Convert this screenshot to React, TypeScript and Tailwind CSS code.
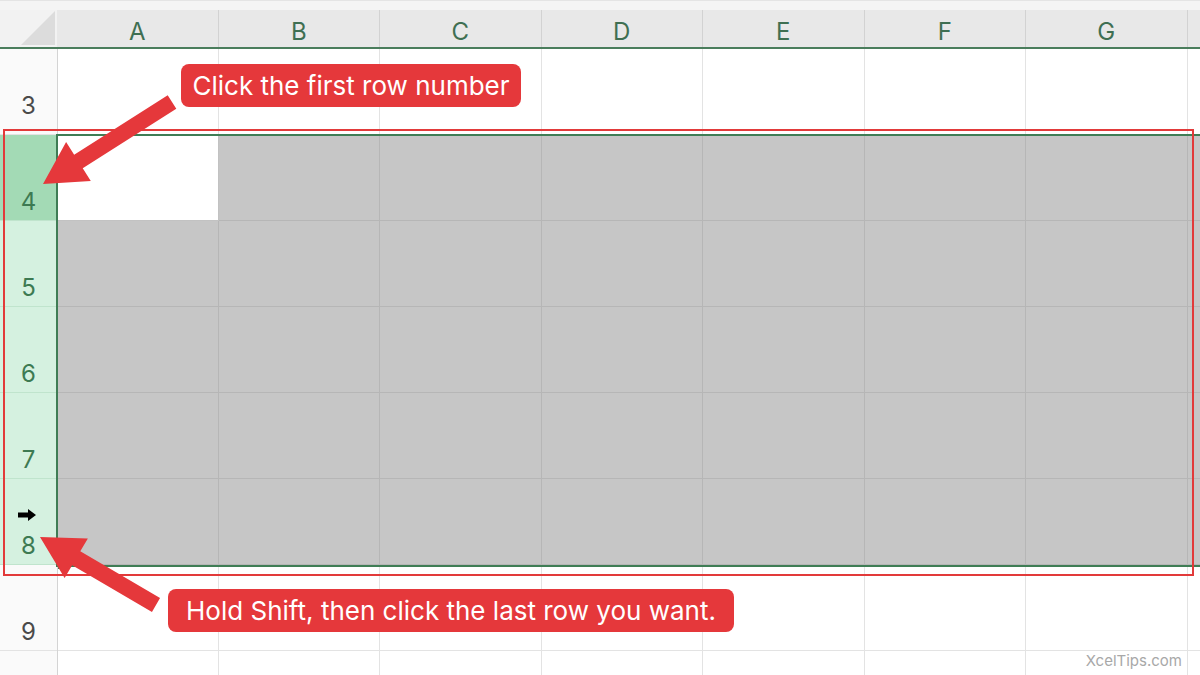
const columns = ["A", "B", "C", "D", "E", "F", "G"];
const rows = [3, 4, 5, 6, 7, 8, 9, 10];
const selected = [4, 5, 6, 7, 8];

function Arrow({ from, to }: { from: [number, number]; to: [number, number] }) {
  const [x1, y1] = from;
  const [x2, y2] = to;
  const dx = x2 - x1;
  const dy = y2 - y1;
  const len = Math.hypot(dx, dy);
  const ux = dx / len;
  const uy = dy / len;
  const px = -uy;
  const py = ux;
  const head = 42;
  const wing = 23;
  const shaft = 8;
  const bx = x2 - ux * head;
  const by = y2 - uy * head;
  const pts = [
    [x1 + px * shaft, y1 + py * shaft],
    [bx + px * shaft, by + py * shaft],
    [bx + px * wing, by + py * wing],
    [x2, y2],
    [bx - px * wing, by - py * wing],
    [bx - px * shaft, by - py * shaft],
    [x1 - px * shaft, y1 - py * shaft],
  ]
    .map((p) => p.join(","))
    .join(" ");
  return <polygon points={pts} fill="#e5383b" />;
}

function RowHeader({ n }: { n: number }) {
  const isSel = selected.includes(n);
  const bg = n === 4 ? "bg-[#a3dab5]" : isSel ? "bg-[#d5f1e0]" : "bg-[#fafafa]";
  const color = isSel ? "text-[#3d7a52]" : "text-[#4a4a4a]";
  return (
    <div
      className={`relative flex w-[57px] shrink-0 items-end justify-center border-b text-[24px] ${
        n === 3 ? "pb-[10px]" : "pb-0"
      } ${bg} ${color} ${isSel ? "border-[#c0e4cd]" : "border-[#e3e3e3]"}`}
    >
      {n === 8 && (
        <svg className="absolute left-[17px] top-[29px]" width="20" height="14" viewBox="0 0 20 14">
          <path d="M1 4.5h10V1l8 6-8 6V9.5H1z" fill="#000" />
        </svg>
      )}
      {n < 10 ? n : null}
    </div>
  );
}

export default function App() {
  return (
    <div
      className="relative h-[675px] w-[1200px] overflow-hidden bg-white"
      style={{ fontFamily: "Inter, 'Open Sans', sans-serif" }}
    >
      <div className="h-[10px] border-t border-[#e4e4e4] bg-[#f4f4f4]" />

      {/* column headers */}
      <div className="flex h-[39px] border-b-2 border-[#4a7d5c] bg-[#e8e8e8]">
        <div className="relative w-[57px] shrink-0 bg-[#f2f2f2]">
          <svg className="absolute bottom-[2px] right-[2px]" width="34" height="34" viewBox="0 0 34 34">
            <path d="M34 0V34H0z" fill="#dcdcdc" />
          </svg>
        </div>
        {columns.map((c) => (
          <div
            key={c}
            className="flex w-[161.5px] shrink-0 items-center justify-center border-r border-[#d2d2d2] pt-[6px] text-[24px] text-[#3f6f52]"
          >
            {c}
          </div>
        ))}
        <div className="flex-1" />
      </div>

      {/* body rows */}
      {rows.map((n) => {
        const isSel = selected.includes(n);
        return (
          <div key={n} className="flex h-[86px]">
            <RowHeader n={n} />
            <div className="w-px shrink-0 bg-[#d4d4d4]" />
            {columns.map((c) => {
              const active = n === 4 && c === "A";
              const cls = active
                ? "bg-white border-[#c2c2c2]"
                : isSel
                  ? "bg-[#c6c6c6] border-[#b6b6b6]"
                  : "bg-white border-[#e3e3e3]";
              return (
                <div
                  key={c}
                  className={`shrink-0 border-b border-r ${c === "A" ? "w-[160.5px]" : "w-[161.5px]"} ${cls}`}
                />
              );
            })}
            <div
              className={`flex-1 border-b ${isSel ? "bg-[#c6c6c6] border-[#b6b6b6]" : "border-[#e3e3e3]"}`}
            />
          </div>
        );
      })}

      {/* selection outline */}
      <div className="absolute left-[56px] top-[134px] h-[433px] w-[1150px] border-2 border-[#3f7d55]" />
      <div className="absolute left-[58px] top-[564px] h-[5px] w-[5px] bg-[#3f7d55]" />

      {/* red highlight box */}
      <div className="absolute left-[3px] top-[129px] h-[447px] w-[1191px] border-2 border-[#e23a3a]" />

      {/* arrows */}
      <svg className="absolute left-0 top-0" width="1200" height="675" viewBox="0 0 1200 675">
        <Arrow from={[172, 102]} to={[43, 184]} />
        <Arrow from={[156, 605]} to={[40, 537]} />
      </svg>

      <div className="absolute left-[181px] top-[64px] flex h-[43px] w-[340px] items-center justify-center rounded-lg bg-[#e5383b] text-[26px] text-white">
        Click the first row number
      </div>
      <div className="absolute left-[168px] top-[589px] flex h-[43px] w-[566px] items-center justify-center rounded-lg bg-[#e5383b] text-[26px] text-white">
        Hold Shift, then click the last row you want.
      </div>

      <div className="absolute right-[18px] top-[650px] text-[15px] text-[#a8a8a8]">XcelTips.com</div>
    </div>
  );
}
